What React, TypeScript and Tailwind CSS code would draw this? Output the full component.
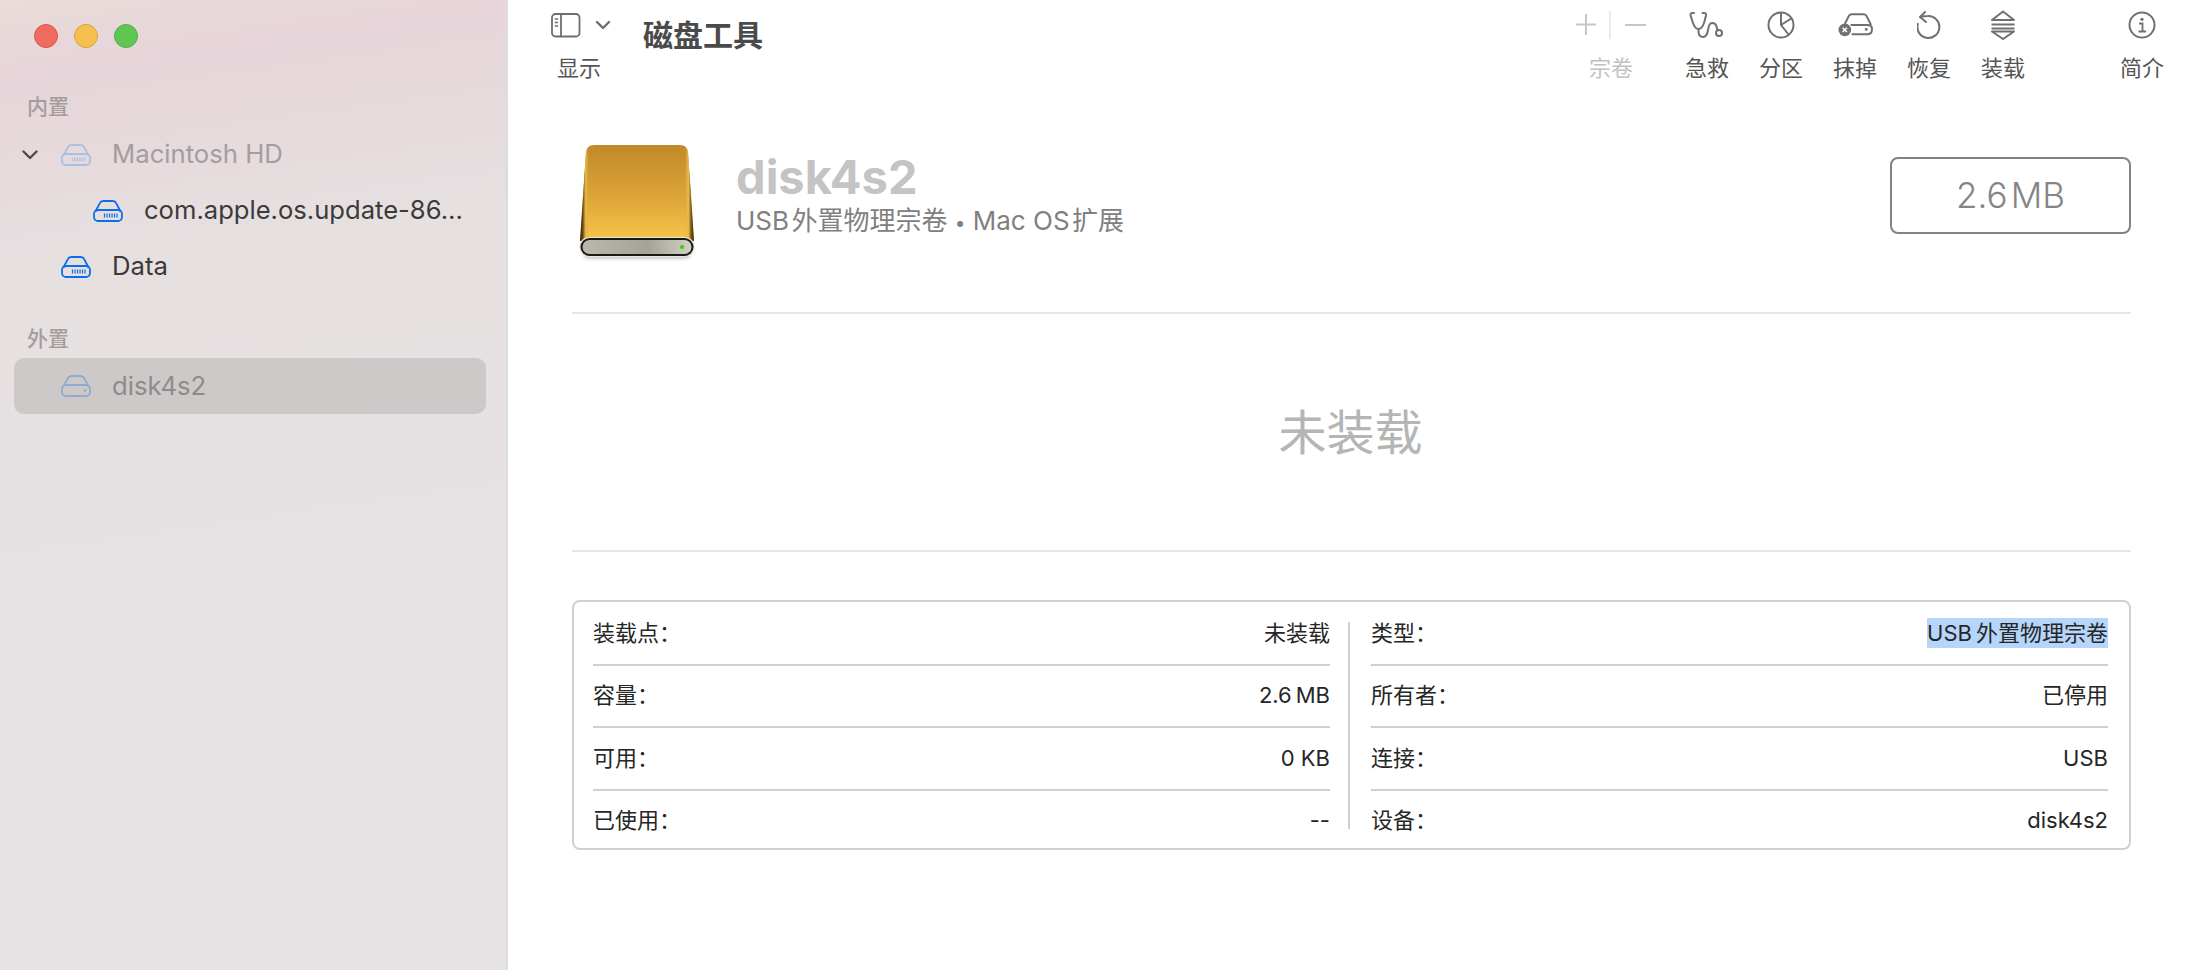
import React from 'react';

const DriveGlyph = ({ color, kind }: { color: string; kind: 'vents' | 'dot' }) => (
  <svg width="30" height="22" viewBox="0 0 30 22" fill="none" stroke={color} strokeWidth="1.8" className="shrink-0">
    <path d="M2.5 11.5 L6.8 3.2 Q7.8 1 10.2 1 H19.8 Q22.2 1 23.2 3.2 L27.5 11.5" />
    <rect x="1" y="10" width="28" height="11" rx="4" />
    {kind === 'vents' ? (
      <path d="M11.5 13.5 V17.5 M14 13.5 V17.5 M16.5 13.5 V17.5 M19 13.5 V17.5 M21.5 13.5 V17.5 M24 13.5 V17.5" strokeWidth="1.2" />
    ) : (
      <circle cx="24" cy="15.5" r="1.3" fill={color} stroke="none" />
    )}
  </svg>
);

const sideIcon = (
  <svg width="30" height="25" viewBox="0 0 30 25" fill="none" stroke="#6e6e6e" strokeWidth="1.8">
    <rect x="1" y="1" width="27.5" height="22.5" rx="3.5" />
    <path d="M10 1 V23.5" />
    <path d="M3.8 6 H7 M3.8 9.5 H7 M3.8 13 H7" strokeWidth="1.4" />
  </svg>
);

const chevronSmall = (
  <svg width="16" height="10" viewBox="0 0 16 10" fill="none" stroke="#6e6e6e" strokeWidth="2.4" strokeLinecap="round" strokeLinejoin="round">
    <path d="M2 2 L8 8 L14 2" />
  </svg>
);

const plusMinus = (
  <svg width="80" height="30" viewBox="0 0 80 30" fill="none" stroke="#c6c6c6" strokeWidth="2" className="ml-[8px]">
    <path d="M11 4 V25 M1 14.5 H21" />
    <path d="M35 1 V29" stroke="#ececec" />
    <path d="M50 15 H71" />
  </svg>
);

const stethoscope = (
  <svg width="36" height="30" viewBox="0 0 36 30" fill="none" stroke="#707070" strokeWidth="2" strokeLinecap="round">
    <path d="M5 3 H3.5 Q1 3 1.6 5.5 L4 13 Q6 19 9.5 19 Q13 19 15 13 L17 5.5 Q17.6 3 15 3 H13.5" />
    <path d="M9.5 19 V22 Q10 27 14 27 Q18 27 19 20 Q20 13 23 13 Q27 13 27.6 17 L28.5 20" />
    <circle cx="30" cy="23" r="3" />
  </svg>
);

const pieIcon = (
  <svg width="28" height="28" viewBox="0 0 28 28" fill="none" stroke="#707070" strokeWidth="2">
    <circle cx="14" cy="14" r="12.5" />
    <path d="M14 1.5 V14 L22 24 M14 14 L25 7" />
  </svg>
);

const eraseIcon = (
  <svg width="35" height="26" viewBox="0 0 36 26" fill="none" stroke="#707070" strokeWidth="2">
    <path d="M7 12 L11 4 Q12 2 14.5 2 H26 Q28.5 2 29.5 4 L34 13" />
    <path d="M13 13 H30 Q35 13 35 17 Q35 22.5 30 22.5 H14" />
    <circle cx="29" cy="17.5" r="1.5" fill="#707070" stroke="none" />
    <circle cx="7" cy="18" r="6.5" fill="#707070" stroke="none" />
    <path d="M4.8 15.8 L9.2 20.2 M9.2 15.8 L4.8 20.2" stroke="#ffffff" strokeWidth="1.6" />
  </svg>
);

const restoreIcon = (
  <svg width="24" height="32" viewBox="0 0 24 32" fill="none" stroke="#707070" strokeWidth="2" strokeLinecap="round" strokeLinejoin="round">
    <path d="M8 3 L3 8 L9 13" />
    <path d="M3.5 8 Q7 7 11 7 A11 11 0 1 1 0.8 15" />
  </svg>
);

const mountIcon = (
  <svg width="26" height="30" viewBox="0 0 26 30" fill="none" stroke="#707070" strokeWidth="2" strokeLinejoin="round">
    <path d="M2 10 L13 1.5 L24 10 Z" />
    <path d="M1.5 14.5 H24.5 M1.5 18.5 H24.5" />
    <path d="M2 21.5 H24 L13 29 Z" />
  </svg>
);

const infoIcon = (
  <svg width="28" height="28" viewBox="0 0 28 28" fill="none" stroke="#707070" strokeWidth="2">
    <circle cx="14" cy="14" r="12.5" />
    <circle cx="14" cy="8.3" r="1.6" fill="#707070" stroke="none" />
    <path d="M11 12.5 H14.5 V20 M10.5 20.5 H18" strokeWidth="1.8" />
  </svg>
);

const ExternalDrive = () => (
  <svg width="118" height="120" viewBox="0 0 118 120" className="shrink-0">
    <defs>
      <linearGradient id="bodyFill" x1="0" y1="0" x2="0" y2="1">
        <stop offset="0" stopColor="#c08a2a" />
        <stop offset="0.5" stopColor="#dba236" />
        <stop offset="1" stopColor="#f7c64a" />
      </linearGradient>
      <linearGradient id="edgeFill" x1="0" y1="0" x2="1" y2="0">
        <stop offset="0" stopColor="#2e1e03" />
        <stop offset="0.025" stopColor="#6b4a0c" />
        <stop offset="0.05" stopColor="#e9bb4c" />
        <stop offset="0.08" stopColor="#d8a63d" stopOpacity="0" />
        <stop offset="0.92" stopColor="#d8a63d" stopOpacity="0" />
        <stop offset="0.95" stopColor="#edc052" />
        <stop offset="0.975" stopColor="#7a560f" />
        <stop offset="1" stopColor="#3a2705" />
      </linearGradient>
      <linearGradient id="barFill" x1="0" y1="0" x2="1" y2="0">
        <stop offset="0" stopColor="#bbb9ae" />
        <stop offset="0.6" stopColor="#a5a297" />
        <stop offset="1" stopColor="#d3d1c7" />
      </linearGradient>
      <filter id="driveShadow" x="-10%" y="-50%" width="120%" height="200%">
        <feGaussianBlur stdDeviation="2.2" />
      </filter>
    </defs>
    <rect x="6" y="106" width="106" height="9" rx="4.5" fill="#000000" opacity="0.3" filter="url(#driveShadow)" />
    <path d="M16 2 H102 Q109 2 110 9 L116 98 H2 L8 9 Q9 2 16 2 Z" fill="url(#bodyFill)" />
    <path d="M16 2 H102 Q109 2 110 9 L116 98 H2 L8 9 Q9 2 16 2 Z" fill="url(#edgeFill)" />
    <rect x="1" y="94" width="116" height="20" rx="10" fill="#e9e7dd" />
    <rect x="2.5" y="95" width="113" height="18" rx="9" fill="#1a1a18" />
    <rect x="4.5" y="97" width="109" height="14" rx="7" fill="url(#barFill)" />
    <circle cx="104" cy="104" r="3.2" fill="#9fe07c" opacity="0.6" />
    <circle cx="104" cy="104" r="2" fill="#46c02f" />
  </svg>
);

const ToolItem = ({ icon, label, width = 'w-[74px]', muted }: { icon: React.ReactNode; label: string; width?: string; muted?: boolean }) => (
  <div className={`flex flex-col items-center ${width}`}>
    <div className="flex h-[50px] items-center justify-center">{icon}</div>
    <div className={`h-[36px] text-[22px] leading-[36px] ${muted ? 'text-[#c2c2c2]' : 'text-[#555555]'}`}>{label}</div>
  </div>
);

const leftRows = [
  ['装载点：', '未装载'],
  ['容量：', '2.6\u2009MB'],
  ['可用：', '0 KB'],
  ['已使用：', '--'],
];

const rightRows = [
  ['类型：', 'USB\u2009外置物理宗卷'],
  ['所有者：', '已停用'],
  ['连接：', 'USB'],
  ['设备：', 'disk4s2'],
];

const InfoColumn = ({ rows, selectFirst }: { rows: string[][]; selectFirst?: boolean }) => (
  <div className="w-[737px]">
    {rows.map((row, i) => (
      <div
        key={row[0]}
        className={`flex justify-between text-[22px] leading-[22px] text-[#262626] ${i < rows.length - 1 ? 'mb-[18.3px] border-b-2 border-[#d0d0d0] pb-[20px]' : ''}`}
      >
        <span>{row[0]}</span>
        {selectFirst && i === 0 ? (
          <span className="-my-[4px] inline-block h-[30px] bg-[#b6d5fb] leading-[30px]">{row[1]}</span>
        ) : (
          <span>{row[1]}</span>
        )}
      </div>
    ))}
  </div>
);

export default function App() {
  return (
    <div className="flex h-[970px] w-[2192px] overflow-hidden bg-white font-[Inter,'Noto_Sans_CJK_SC',sans-serif]">
      {/* sidebar */}
      <aside className="h-full w-[508px] shrink-0 border-r-2 border-[#dcdcdc] bg-[linear-gradient(172deg,#e9dcd9_0px,#e7d5da_70px,#e6d8db_130px,#e6e0e1_270px,#e6e2e3_100%)]">
        <div className="mt-[24px] flex gap-[16px] pl-[34px]">
          <div className="h-[24px] w-[24px] rounded-full border border-[#d9574c] bg-[#ef6b5f]" />
          <div className="h-[24px] w-[24px] rounded-full border border-[#dba23c] bg-[#f6c04f]" />
          <div className="h-[24px] w-[24px] rounded-full border border-[#4fb043] bg-[#5fc653]" />
        </div>
        <div className="mt-[39px] flex h-[40px] items-center pl-[27px] text-[21px] font-medium text-[#a49c9d]">内置</div>
        <div className="flex h-[56px] items-center pb-[1px] pl-[22px]">
          <svg width="16" height="10" viewBox="0 0 16 10" fill="none" stroke="#4e4a4a" strokeWidth="2.4" strokeLinecap="round" strokeLinejoin="round" className="shrink-0">
            <path d="M1.5 1.5 L8 8 L14.5 1.5" />
          </svg>
          <div className="ml-[23px]"><DriveGlyph color="#a9c0e4" kind="vents" /></div>
          <span className="ml-[21px] text-[25.7px] text-[#a39e9e]">Macintosh HD</span>
        </div>
        <div className="flex h-[56px] items-center pb-[1px] pl-[93px]">
          <DriveGlyph color="#0a6fe8" kind="vents" />
          <span className="ml-[21px] text-[25.6px] text-[#3c3939]">com.apple.os.update-86…</span>
        </div>
        <div className="flex h-[56px] items-center pb-[1px] pl-[61px]">
          <DriveGlyph color="#0a6fe8" kind="vents" />
          <span className="ml-[21px] text-[25.7px] text-[#3c3939]">Data</span>
        </div>
        <div className="mt-[24px] flex h-[39px] items-center pl-[27px] text-[21px] font-medium text-[#a49c9d]">外置</div>
        <div className="ml-[14px] flex h-[56px] w-[472px] items-center rounded-[10px] bg-[#cdc9c8] pl-[47px]">
          <DriveGlyph color="#90abd2" kind="dot" />
          <span className="ml-[21px] text-[25.7px] text-[#8f8b8b]">disk4s2</span>
        </div>
      </aside>

      {/* main panel */}
      <main className="min-w-0 flex-1">
        <div className="flex h-[86px] pl-[43px] pr-[13px]">
          <div className="w-[60px]">
            <div className="flex h-[50px] items-center justify-between">
              {sideIcon}
              {chevronSmall}
            </div>
            <div className="h-[36px] pl-[6px] text-[22px] leading-[36px] text-[#555555]">显示</div>
          </div>
          <div className="ml-[32px] mt-[10px] h-[50px] text-[30px] font-bold leading-[50px] text-[#4a4a4a]">磁盘工具</div>
          <div className="ml-auto flex">
            <ToolItem icon={plusMinus} label="宗卷" width="w-[96px]" muted />
            <div className="ml-[11px] flex">
              <ToolItem icon={stethoscope} label="急救" />
              <ToolItem icon={pieIcon} label="分区" />
              <ToolItem icon={eraseIcon} label="抹掉" />
              <ToolItem icon={restoreIcon} label="恢复" />
              <ToolItem icon={mountIcon} label="装载" />
            </div>
            <div className="ml-[65px]">
              <ToolItem icon={infoIcon} label="简介" />
            </div>
          </div>
        </div>

        <div className="ml-[64px] mr-[61px]">
          <div className="flex h-[226px] items-start">
            <div className="ml-[6px] mt-[57px]"><ExternalDrive /></div>
            <div className="ml-[40px] mt-[63px]">
              <div className="text-[47px] font-bold leading-[56px] text-[#c4c4c4]">disk4s2</div>
              <div className="text-[26px] leading-[32px] text-[#808080]">
                USB{'\u200a'}外置物理宗卷 <span className="text-[19px]">•</span> Mac OS{'\u200a'}扩展
              </div>
            </div>
            <div className="ml-auto mt-[71px] flex h-[77px] w-[241px] items-center justify-center rounded-[8px] border-2 border-[#828282] text-[35px] font-light text-[#858585]">
              2.6{'\u200a'}MB
            </div>
          </div>
          <div className="h-[2px] bg-[#e6e6e6]" />
          <div className="flex h-[236px] items-center justify-center pr-[2px] pt-[2px] text-[48px] text-[#b5b5b5]">未装载</div>
          <div className="h-[2px] bg-[#e6e6e6]" />
          <div className="mt-[48px] flex h-[250px] rounded-[8px] border-2 border-[#d0d0d0] pl-[19px] pt-[20px]">
            <InfoColumn rows={leftRows} />
            <div className="ml-[18px] mr-[21px] h-[207px] w-[2px] bg-[#d0d0d0]" />
            <InfoColumn rows={rightRows} selectFirst />
          </div>
        </div>
      </main>
    </div>
  );
}
